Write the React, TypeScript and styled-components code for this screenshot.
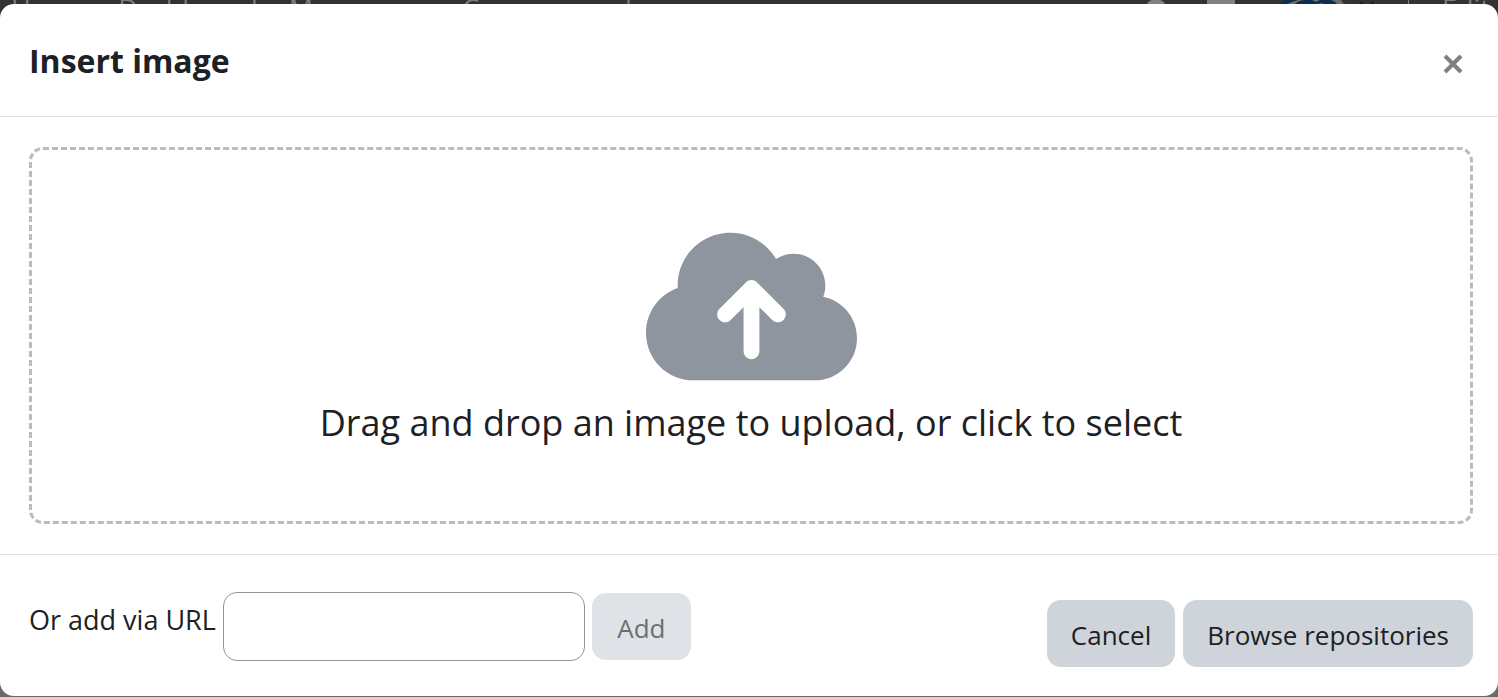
import React from "react";
import styled, { createGlobalStyle } from "styled-components";
import { FaCloudArrowUp } from "react-icons/fa6";

const GlobalStyle = createGlobalStyle`
  * { box-sizing: border-box; }
  body {
    margin: 0;
    background: #6b6b6b;
    color: #1d2125;
    font: 27px/40px "Segoe UI", "Open Sans", "Noto Sans", sans-serif;
  }
`;

const Page = styled.div`
  display: flex;
  flex-direction: column;
  min-height: 100vh;
  padding-bottom: 1px;
  background: linear-gradient(#323232 32px, #6b6b6b 32px);
`;

/* The dimmed site bar; only its upper edge shows above the dialog. */
const TopBar = styled.div`
  height: 4px;
  overflow: hidden;
  display: flex;
  justify-content: space-between;
  padding-left: 11px;
  color: #7c7c7c;
  line-height: 18px;
  white-space: nowrap;
`;

const SiteNav = styled.nav`
  display: flex;
  gap: 31px;
`;

const UserTools = styled.div`
  display: flex;
  gap: 33px;
`;

const Divider = styled.span`
  width: 1px;
  background: #808080;
`;

const EditLabel = styled.span`
  width: 56px;
  overflow: hidden;
`;

const Dialog = styled.section`
  flex: 1;
  display: flex;
  flex-direction: column;
  background: #fff;
  border-radius: 14px;
`;

const Header = styled.header`
  display: flex;
  align-items: center;
  justify-content: space-between;
  height: 113px;
  padding: 2px 29px 0;
  border-bottom: 1px solid #dee2e6;
`;

const Title = styled.h1`
  margin: 0;
  font-size: 32px;
  font-weight: 700;
`;

const CloseButton = styled.button`
  display: flex;
  padding: 14px 6px 8px;
  border: 0;
  background: none;
  color: #808080;
`;

const Body = styled.div`
  flex: 1;
  display: flex;
  padding: 30px 25px 30px 29px;
`;

const DropZone = styled.button`
  flex: 1;
  display: flex;
  flex-direction: column;
  align-items: center;
  justify-content: center;
  gap: 4px;
  padding-top: 2px;
  border: 3px dashed #bbb;
  border-radius: 14px;
  background: none;
  color: inherit;
  font: inherit;
  font-size: 36px;
  line-height: 56px;
`;

const CloudIcon = styled(FaCloudArrowUp)`
  width: 211px;
  height: 169px;
  color: #8f959e;
`;

const Footer = styled.footer`
  display: flex;
  justify-content: space-between;
  padding: 37px 25px 29px 29px;
  border-top: 1px solid #dee2e6;
`;

const UrlGroup = styled.div`
  display: flex;
  align-items: flex-start;
  gap: 7px;
`;

const UrlLabel = styled.label`
  line-height: 56px;
`;

const UrlInput = styled.input`
  width: 362px;
  height: 69px;
  padding: 0 20px;
  border: 1px solid #8f959e;
  border-radius: 14px;
  font: inherit;
`;

const Actions = styled.div`
  display: flex;
  align-items: flex-end;
  gap: 8px;
  padding-top: 8px;
`;

const Button = styled.button`
  min-width: 99px;
  height: 67px;
  padding: 2px 24px 0;
  border: 0;
  border-radius: 14px;
  background: #ced4da;
  color: #1d2125;
  font: inherit;
  font-size: 26px;
  &:disabled { opacity: 0.65; }
`;

const AddButton = styled(Button)`
  margin-top: 1px;
`;

export default function App() {
  return (
    <Page>
      <GlobalStyle />
      <TopBar aria-hidden="true">
        <SiteNav>
          <span>Home</span>
          <span>Dashboard</span>
          <span>My courses</span>
          <span>Course search</span>
        </SiteNav>
        <UserTools>
          <svg width="228" height="4" viewBox="0 0 228 4">
            <path d="M0 4Q2 0 6 0H12Q16 0 18 4Z" fill="#808080" />
            <path d="M60 0H88V4H60Z" fill="#808080" />
            <path d="M132 4L137 0H194L197 4Z" fill="#6e6e68" />
            <path d="M132 4L137 0H151L145 2L140 4ZM148 4Q152 0 158 0H165L169 2L173 0H184Q188 1 190 4H177L175 3L169 4Z" fill="#0b2d50" />
            <path d="M213 3L216 4M227 3L224 4" stroke="#181818" strokeWidth="2" />
          </svg>
          <Divider />
          <EditLabel>Edit mode</EditLabel>
        </UserTools>
      </TopBar>
      <Dialog role="dialog" aria-labelledby="title">
        <Header>
          <Title id="title">Insert image</Title>
          <CloseButton type="button" aria-label="Close">
            <svg width="20" height="20" viewBox="0 0 20 20" fill="none" stroke="currentColor" strokeWidth="4">
              <path d="M2 2L18 18M18 2L2 18" />
            </svg>
          </CloseButton>
        </Header>
        <Body>
          <DropZone type="button">
            <CloudIcon />
            Drag and drop an image to upload, or click to select
          </DropZone>
        </Body>
        <Footer>
          <UrlGroup>
            <UrlLabel htmlFor="url">Or add via URL</UrlLabel>
            <UrlInput id="url" type="text" />
            <AddButton type="button" disabled>Add</AddButton>
          </UrlGroup>
          <Actions>
            <Button type="button">Cancel</Button>
            <Button type="button">Browse repositories</Button>
          </Actions>
        </Footer>
      </Dialog>
    </Page>
  );
}
